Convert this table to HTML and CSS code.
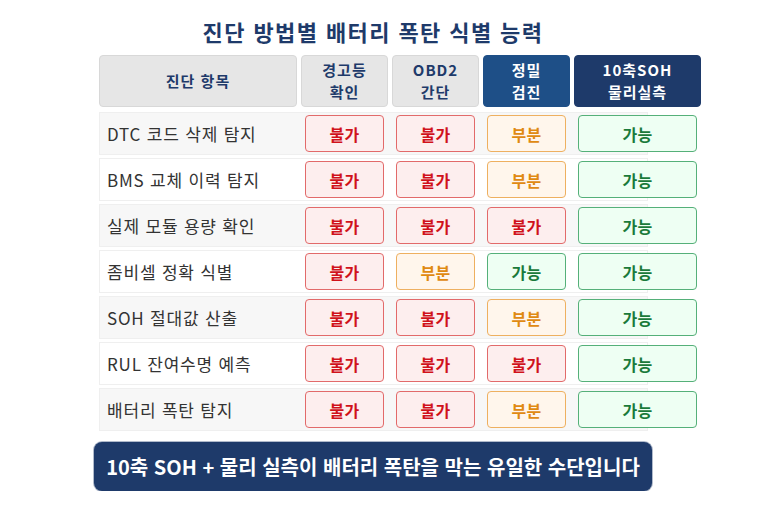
FILE: index.html
```html
<!DOCTYPE html>
<html lang="ko">
<head>
<meta charset="utf-8">
<title>진단 방법별 배터리 폭탄 식별 능력</title>
<link rel="stylesheet" href="styles.css">
</head>
<body>
<main class="page">
  <h1 class="title">진단 방법별 배터리 폭탄 식별 능력</h1>
  <div class="row head">
    <div class="hcell">진단 항목</div>
    <div class="hcell">경고등<br>확인</div>
    <div class="hcell">OBD2<br>간단</div>
    <div class="hcell blue">정밀<br>검진</div>
    <div class="hcell navy">10축SOH<br>물리실측</div>
  </div>
  <div class="rows">
    <div class="row odd">
      <div class="label">DTC 코드 삭제 탐지</div>
      <div class="cell"><span class="badge no">불가</span></div>
      <div class="cell"><span class="badge no">불가</span></div>
      <div class="cell"><span class="badge part">부분</span></div>
      <div class="cell"><span class="badge yes">가능</span></div>
    </div>
    <div class="row">
      <div class="label">BMS 교체 이력 탐지</div>
      <div class="cell"><span class="badge no">불가</span></div>
      <div class="cell"><span class="badge no">불가</span></div>
      <div class="cell"><span class="badge part">부분</span></div>
      <div class="cell"><span class="badge yes">가능</span></div>
    </div>
    <div class="row odd">
      <div class="label">실제 모듈 용량 확인</div>
      <div class="cell"><span class="badge no">불가</span></div>
      <div class="cell"><span class="badge no">불가</span></div>
      <div class="cell"><span class="badge no">불가</span></div>
      <div class="cell"><span class="badge yes">가능</span></div>
    </div>
    <div class="row">
      <div class="label">좀비셀 정확 식별</div>
      <div class="cell"><span class="badge no">불가</span></div>
      <div class="cell"><span class="badge part">부분</span></div>
      <div class="cell"><span class="badge yes">가능</span></div>
      <div class="cell"><span class="badge yes">가능</span></div>
    </div>
    <div class="row odd">
      <div class="label">SOH 절대값 산출</div>
      <div class="cell"><span class="badge no">불가</span></div>
      <div class="cell"><span class="badge no">불가</span></div>
      <div class="cell"><span class="badge part">부분</span></div>
      <div class="cell"><span class="badge yes">가능</span></div>
    </div>
    <div class="row">
      <div class="label">RUL 잔여수명 예측</div>
      <div class="cell"><span class="badge no">불가</span></div>
      <div class="cell"><span class="badge no">불가</span></div>
      <div class="cell"><span class="badge no">불가</span></div>
      <div class="cell"><span class="badge yes">가능</span></div>
    </div>
    <div class="row odd">
      <div class="label">배터리 폭탄 탐지</div>
      <div class="cell"><span class="badge no">불가</span></div>
      <div class="cell"><span class="badge no">불가</span></div>
      <div class="cell"><span class="badge part">부분</span></div>
      <div class="cell"><span class="badge yes">가능</span></div>
    </div>
  </div>
  <div class="banner">10축 SOH + 물리 실측이 배터리 폭탄을 막는 유일한 수단입니다</div>
</main>
</body>
</html>
```
FILE: styles.css
```css
html, body {
  margin: 0;
  padding: 0;
  background: #ffffff;
}
body {
  font-family: "Noto Sans CJK KR", "Noto Sans", sans-serif;
  color: #333333;
}
.page {
  width: 558px;
  margin-left: 94px;
}
.title {
  margin: 16px 0 9px;
  font-size: 22px;
  line-height: 30px;
  letter-spacing: 1.4px;
  font-weight: 700;
  color: #1e3a6a;
  text-align: center;
}
.row {
  display: grid;
  grid-template-columns: 198px 87px 87px 87px 127px;
  column-gap: 4px;
  width: 549px;
  margin-left: 5px;
}
.head {
  margin-bottom: 5px;
}
.hcell {
  height: 52px;
  box-sizing: border-box;
  display: flex;
  align-items: center;
  justify-content: center;
  text-align: center;
  background: #e6e6e6;
  border: 1px solid #d8d8d8;
  border-radius: 4px;
  font-size: 15px;
  line-height: 22px;
  letter-spacing: 1px;
  font-weight: 700;
  color: #1e3a6a;
}
.hcell.blue {
  background: #1e4f87;
  border-color: #1e4f87;
  color: #ffffff;
}
.hcell.navy {
  background: #1e3a6a;
  border-color: #1e3a6a;
  color: #ffffff;
}
.rows {
  display: flex;
  flex-direction: column;
  gap: 3px;
}
.rows .row {
  height: 43px;
  background: #ffffff;
  box-shadow: inset 0 0 0 1px #efefef;
}
.rows .row.odd {
  background: #f7f7f7;
}
.label {
  display: flex;
  align-items: center;
  padding-left: 8px;
  font-size: 17px;
  letter-spacing: 0.8px;
  color: #333333;
}
.cell {
  padding: 3px 4px;
  display: flex;
}
.badge {
  flex: 1;
  box-sizing: border-box;
  height: 37px;
  border: 1px solid;
  border-radius: 4px;
  display: flex;
  align-items: center;
  justify-content: center;
  font-size: 16px;
  letter-spacing: 0.3px;
  font-weight: 700;
}
.badge.no {
  background: #fdeeee;
  border-color: #e26a6a;
  color: #d0121b;
}
.badge.part {
  background: #fff6ec;
  border-color: #eeb060;
  color: #e08a12;
}
.badge.yes {
  background: #eefff3;
  border-color: #55b079;
  color: #1a7a3a;
}
.banner {
  margin-top: 11px;
  height: 49px;
  box-sizing: border-box;
  border-radius: 8px;
  background: #1e3a6a;
  box-shadow: 0 0 0 1px rgba(30, 58, 106, 0.35);
  color: #ffffff;
  font-size: 20px;
  font-weight: 700;
  display: flex;
  align-items: center;
  justify-content: center;
}
```
